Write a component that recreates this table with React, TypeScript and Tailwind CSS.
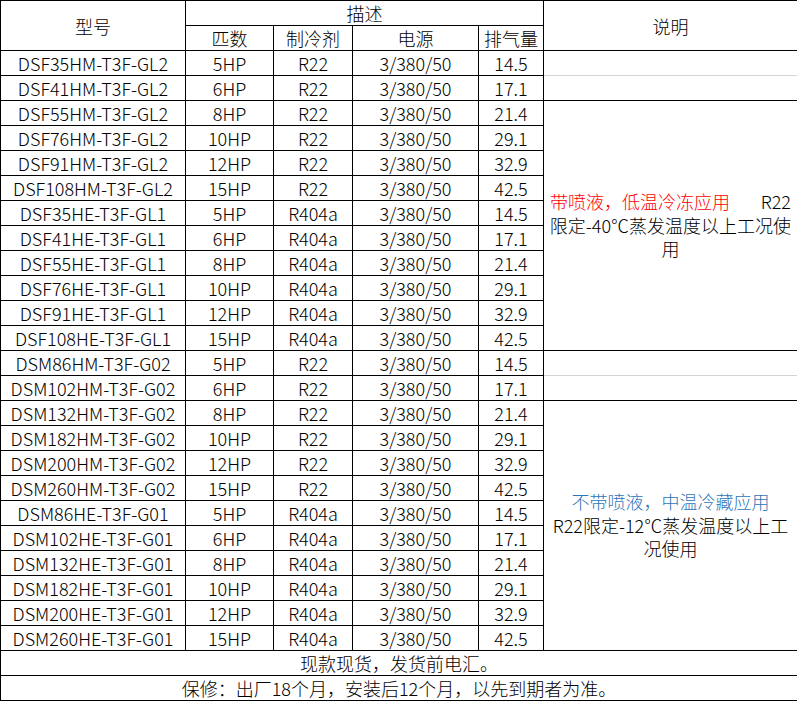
const FONT = { fontFamily: '"Noto Sans CJK SC", "Noto Sans", sans-serif' };

type Row = [string, string, string, string];

const ROWS: Row[] = [
  ['DSF35HM-T3F-GL2', '5HP', 'R22', '14.5'],
  ['DSF41HM-T3F-GL2', '6HP', 'R22', '17.1'],
  ['DSF55HM-T3F-GL2', '8HP', 'R22', '21.4'],
  ['DSF76HM-T3F-GL2', '10HP', 'R22', '29.1'],
  ['DSF91HM-T3F-GL2', '12HP', 'R22', '32.9'],
  ['DSF108HM-T3F-GL2', '15HP', 'R22', '42.5'],
  ['DSF35HE-T3F-GL1', '5HP', 'R404a', '14.5'],
  ['DSF41HE-T3F-GL1', '6HP', 'R404a', '17.1'],
  ['DSF55HE-T3F-GL1', '8HP', 'R404a', '21.4'],
  ['DSF76HE-T3F-GL1', '10HP', 'R404a', '29.1'],
  ['DSF91HE-T3F-GL1', '12HP', 'R404a', '32.9'],
  ['DSF108HE-T3F-GL1', '15HP', 'R404a', '42.5'],
  ['DSM86HM-T3F-G02', '5HP', 'R22', '14.5'],
  ['DSM102HM-T3F-G02', '6HP', 'R22', '17.1'],
  ['DSM132HM-T3F-G02', '8HP', 'R22', '21.4'],
  ['DSM182HM-T3F-G02', '10HP', 'R22', '29.1'],
  ['DSM200HM-T3F-G02', '12HP', 'R22', '32.9'],
  ['DSM260HM-T3F-G02', '15HP', 'R22', '42.5'],
  ['DSM86HE-T3F-G01', '5HP', 'R404a', '14.5'],
  ['DSM102HE-T3F-G01', '6HP', 'R404a', '17.1'],
  ['DSM132HE-T3F-G01', '8HP', 'R404a', '21.4'],
  ['DSM182HE-T3F-G01', '10HP', 'R404a', '29.1'],
  ['DSM200HE-T3F-G01', '12HP', 'R404a', '32.9'],
  ['DSM260HE-T3F-G01', '15HP', 'R404a', '42.5'],
];

const td = 'border border-black h-[24px] p-0 text-center align-middle whitespace-nowrap';

function NoteCell({ index }: { index: number }) {
  // 说明 column: two single rows, then a 10-row merged block, per series
  if (index === 0 || index === 12) {
    return <td className="border border-black border-b-[#d4d4d4] h-[24px] p-0" />;
  }
  if (index === 1 || index === 13) {
    return <td className="border border-black h-[24px] p-0" />;
  }
  if (index === 2) {
    return (
      <td rowSpan={10} className="border border-black p-0 align-middle leading-[23.5px]">
        <div className="flex justify-between px-[6px]">
          <span className="text-[#ff0000]">带喷液，低温冷冻应用</span>
          <span>R22</span>
        </div>
        <div className="text-center">限定-40℃蒸发温度以上工况使</div>
        <div className="text-center">用</div>
      </td>
    );
  }
  if (index === 14) {
    return (
      <td rowSpan={10} className="border border-black p-0 align-middle leading-[23.5px]">
        <div className="text-center text-[#2e75b6]">不带喷液，中温冷藏应用</div>
        <div className="text-center">R22限定-12℃蒸发温度以上工</div>
        <div className="text-center">况使用</div>
      </td>
    );
  }
  return null;
}

export default function App() {
  return (
    <div className="bg-white w-[797px] h-[701px] text-black text-[18px] font-light leading-[24px]" style={FONT}>
      <table className="border-collapse table-fixed w-[797px]">
        <colgroup>
          <col className="w-[185px]" />
          <col className="w-[88px]" />
          <col className="w-[79px]" />
          <col className="w-[126px]" />
          <col className="w-[65px]" />
          <col className="w-[254px]" />
        </colgroup>
        <tbody>
          <tr>
            <td rowSpan={2} className={td}>型号</td>
            <td colSpan={4} className={td}>描述</td>
            <td rowSpan={2} className={td}>说明</td>
          </tr>
          <tr>
            <td className={td}>匹数</td>
            <td className={td}>制冷剂</td>
            <td className={td}>电源</td>
            <td className={td}>排气量</td>
          </tr>
          {ROWS.map(([model, hp, gas, disp], i) => (
            <tr key={model}>
              <td className={td}>{model}</td>
              <td className={td}>{hp}</td>
              <td className={td}>{gas}</td>
              <td className={td}>3/380/50</td>
              <td className={td}>{disp}</td>
              <NoteCell index={i} />
            </tr>
          ))}
          <tr>
            <td colSpan={6} className={td}>现款现货，发货前电汇。</td>
          </tr>
          <tr>
            <td colSpan={6} className={td}>保修：出厂18个月，安装后12个月，以先到期者为准。</td>
          </tr>
        </tbody>
      </table>
    </div>
  );
}
